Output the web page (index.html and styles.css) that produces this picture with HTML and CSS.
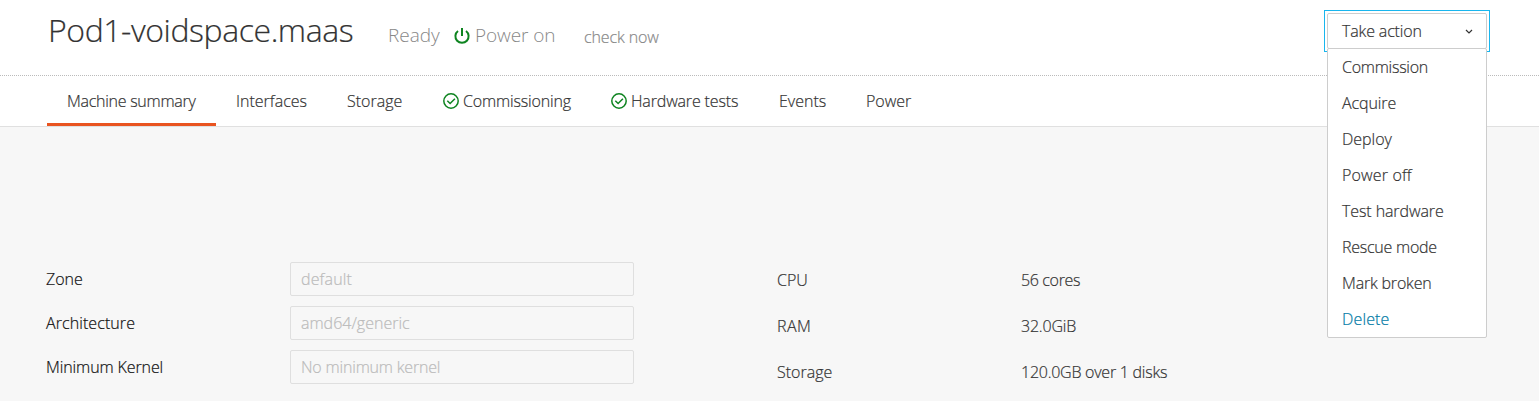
FILE: index.html
```html
<!DOCTYPE html>
<html lang="en">
<head>
<meta charset="utf-8">
<title>Pod1-voidspace.maas</title>
<link rel="stylesheet" href="styles.css">
</head>
<body>
<header class="page-header">
  <h1 class="title"><span>Pod1-voidspace.maas</span></h1>
  <span class="status"><span>Ready</span></span>
  <svg class="power-icon" viewBox="0 0 16 16"><path d="M4 3A6.6 6.6 0 1 0 12 3M8 0v8" /></svg>
  <span class="power-state"><span>Power on</span></span>
  <a class="check"><span>check now</span></a>
  <div class="action">
    <div class="focus-frame">
      <button class="action-toggle"><span class="t-take">Take action</span><svg class="chevron" viewBox="0 0 8 6"><path d="M1 1l3 3 3-3"/></svg></button>
    </div>
    <ul class="menu">
      <li><span class="t-commission">Commission</span></li>
      <li><span class="t-acquire">Acquire</span></li>
      <li><span class="t-deploy">Deploy</span></li>
      <li><span class="t-off">Power off</span></li>
      <li><span class="t-test">Test hardware</span></li>
      <li><span class="t-rescue">Rescue mode</span></li>
      <li><span class="t-mark">Mark broken</span></li>
      <li class="delete"><span class="t-delete">Delete</span></li>
    </ul>
  </div>
</header>
<nav class="tabs">
  <a class="tab tab-summary active"><span>Machine summary</span></a>
  <a class="tab tab-interfaces"><span>Interfaces</span></a>
  <a class="tab tab-storage"><span>Storage</span></a>
  <a class="tab tab-commissioning"><svg class="ok" viewBox="0 0 16 16"><circle cx="8" cy="8" r="7.2"/><path d="M4.3 7.8l2.8 2.7 4.8-4.8"/></svg><span>Commissioning</span></a>
  <a class="tab tab-tests"><svg class="ok" viewBox="0 0 16 16"><circle cx="8" cy="8" r="7.2"/><path d="M4.3 7.8l2.8 2.7 4.8-4.8"/></svg><span>Hardware tests</span></a>
  <a class="tab tab-events"><span>Events</span></a>
  <a class="tab tab-power"><span>Power</span></a>
</nav>
<main class="summary">
  <div class="form">
    <label class="t-zone">Zone</label><div class="field"><span class="t-default">default</span></div>
    <label class="t-arch">Architecture</label><div class="field"><span class="t-amd">amd64/generic</span></div>
    <label class="t-kernel">Minimum Kernel</label><div class="field"><span class="t-nokernel">No minimum kernel</span></div>
  </div>
  <dl class="specs">
    <dt class="t-cpu">CPU</dt><dd class="t-cores">56 cores</dd>
    <dt class="t-ram">RAM</dt><dd class="t-gib">32.0GiB</dd>
    <dt class="t-disk">Storage</dt><dd class="t-disks">120.0GB over 1 disks</dd>
  </dl>
</main>
</body>
</html>
```
FILE: styles.css
```css
* { box-sizing: border-box; }
body {
  margin: 0;
  height: 401px;
  overflow: hidden;
  background: #f7f7f7;
  color: #333;
  font: 300 16px/24px "Open Sans", "Noto Sans", sans-serif;
  white-space: nowrap;
  -webkit-text-stroke: 0.2px;
}
.page-header {
  display: flex;
  align-items: flex-start;
  height: 76px;
  padding-left: 48px;
  background: #fff;
  border-bottom: 1px dotted #bbb;
}
.title { width: 340px; margin: 8px 0 0; font-size: 32px; line-height: 44px; font-weight: 300; letter-spacing: -0.42px; }
.status, .power-state { font-size: 19px; color: #888; margin-top: 23px; -webkit-text-stroke: 0; }
.status { width: 66px; }
.power-icon { width: 16px; height: 16px; margin: 28px 5px 0 0; fill: none; stroke: #0e8420; stroke-width: 2; }
.power-state { width: 109px; letter-spacing: -0.1px; }
.check { margin-top: 25px; color: #888; letter-spacing: -0.1px; }
.action { position: relative; width: 160px; margin: 13px 52px 0 auto; z-index: 1; }
.focus-frame { height: 36px; outline: 1px solid #19b6ee; outline-offset: 2px; }
.action-toggle {
  display: flex;
  align-items: center;
  justify-content: space-between;
  width: 160px;
  height: 36px;
  padding: 0 13px 0 14px;
  border: 1px solid #cdcdcd;
  border-radius: 2px;
  background: #fff;
  color: #333;
  font: inherit;
}
.chevron { width: 8px; height: 6px; margin-top: 2px; fill: none; stroke: #333; stroke-width: 1.2; }
.menu {
  position: absolute;
  top: 35px;
  left: 0;
  width: 160px;
  height: 290px;
  margin: 0;
  padding: 0 0 0 14px;
  list-style: none;
  background: #fff;
  border: 1px solid #cdcdcd;
  border-radius: 2px;
}
.menu li { height: 36px; line-height: 36px; }
.menu .delete { color: #007aa6; }
.tabs {
  display: flex;
  height: 51px;
  padding-left: 47px;
  background: #fff;
  border-bottom: 1px solid #e0e0e0;
}
.tab { display: flex; align-items: center; padding: 0 20px; height: 50px; }
.tab.active { border-bottom: 3px solid #e95420; padding-top: 3px; }
.tab-summary { width: 169px; letter-spacing: -0.27px; }
.tab-interfaces { width: 111px; }
.tab-storage { width: 96px; }
.tab-commissioning, .tab-tests { width: 168px; letter-spacing: -0.15px; }
.tab-events { width: 87px; }
.tab-power { width: 86px; }
.ok { flex: none; width: 16px; height: 16px; margin-right: 4px; fill: none; stroke: #0e8420; stroke-width: 1.5; }
.summary { display: flex; padding: 135px 47px 0 46px; }
.form {
  display: grid;
  grid-template-columns: 244px 344px;
  grid-auto-rows: 34px;
  row-gap: 10px;
  align-items: center;
  width: 731px;
  color: #111;
}
.field { height: 34px; padding: 4px 10px; border: 1px solid #dfdfdf; border-radius: 2px; color: #bbb; }
.specs { display: grid; grid-template-columns: 244px auto; grid-auto-rows: 46px; margin: 6px 0 0; }
.specs dd { margin: 0; }

/* Tracking */
.t-take { letter-spacing: -0.15px; }
.t-commission, .t-rescue { letter-spacing: -0.25px; }
.t-acquire, .t-test, .t-kernel { letter-spacing: -0.1px; }
.t-off, .t-delete, .t-default { letter-spacing: 0.15px; }
.t-mark, .t-nokernel { letter-spacing: -0.18px; }
.t-arch { letter-spacing: 0.08px; }
.t-cores { letter-spacing: -0.35px; }
.t-gib { letter-spacing: -0.2px; }
.t-disks { letter-spacing: -0.25px; }
.t-ram { letter-spacing: 0.5px; }
```
